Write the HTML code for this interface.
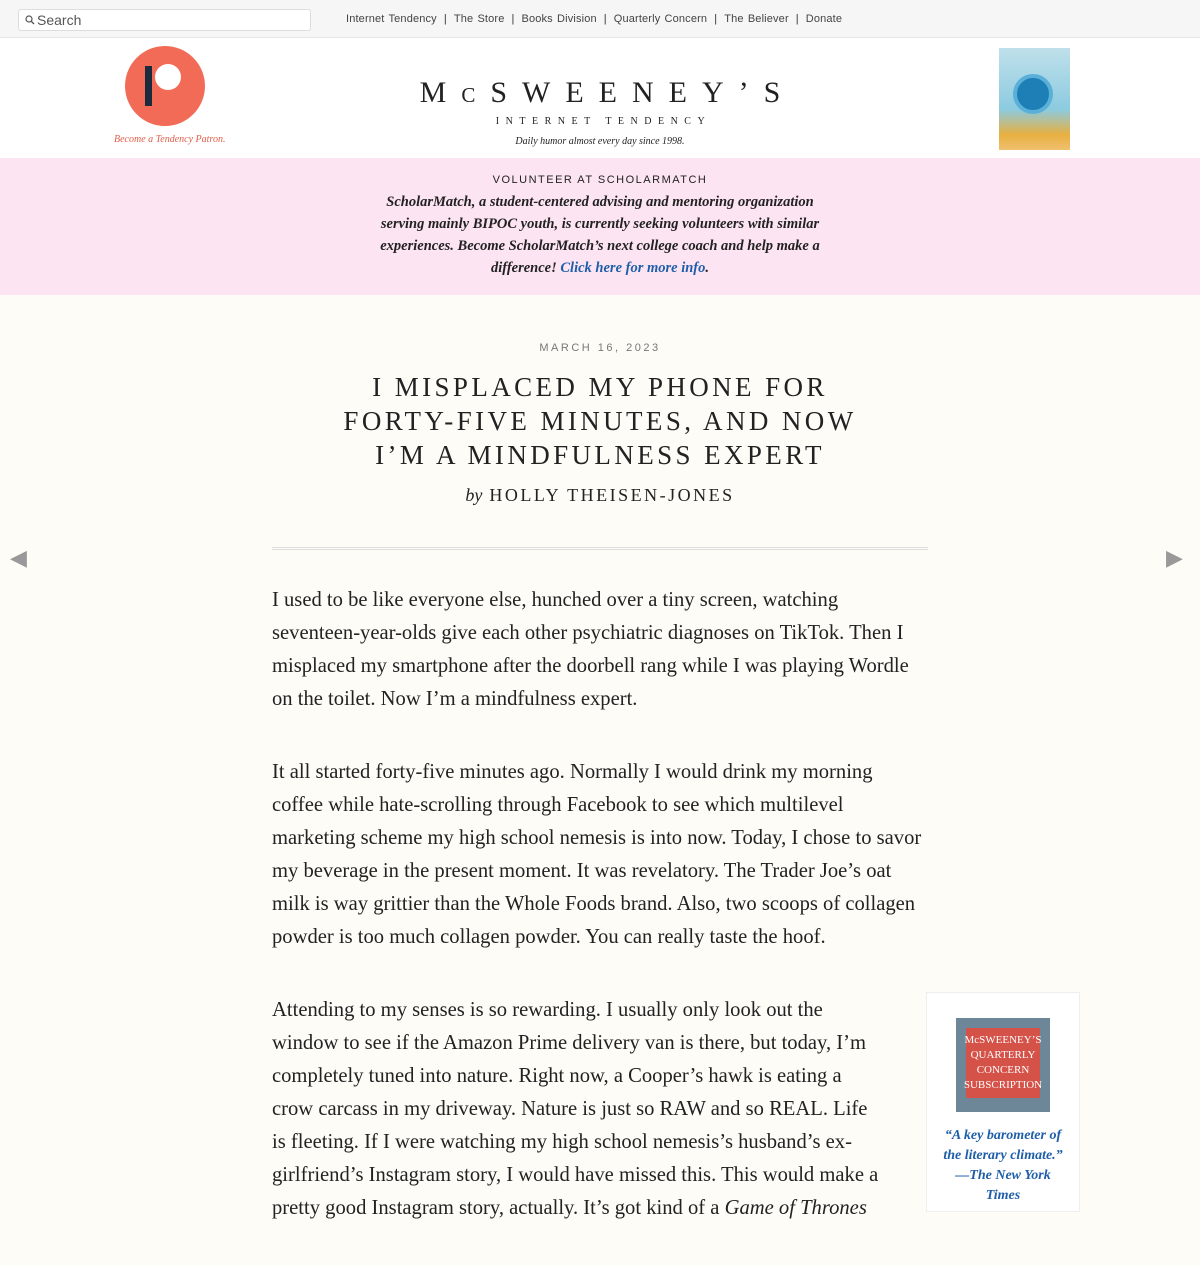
<!DOCTYPE html>
<html><head><meta charset="utf-8"><style>
*{margin:0;padding:0;box-sizing:border-box}
body{width:1200px;height:1200px;overflow:hidden;background:#fdfcf7;font-family:"Liberation Serif",serif;color:#222;position:relative}
.top{height:38px;background:#f6f6f6;border-bottom:1px solid #e6e6e6;position:relative}
.search{position:absolute;left:18px;top:9px;width:293px;height:22px;background:#fff;border:1px solid #ddd;border-radius:3px;font:14px "Liberation Sans",sans-serif;color:#555;padding:2px 0 0 18px}
.search svg{position:absolute;left:6px;top:5px}
.nav{position:absolute;left:346px;top:13px;font:11px "Liberation Sans",sans-serif;color:#444;letter-spacing:0.15px;word-spacing:1px}
.nav span{margin:0 7px;color:#333}
.head{height:120px;background:#fff;position:relative}
.patron{position:absolute;left:125px;top:8px;width:80px;height:80px;border-radius:50%;background:#f26b57}
.patron .bar{position:absolute;left:20px;top:20px;width:7px;height:40px;background:#1c2a3d}
.patron .c{position:absolute;left:30px;top:18px;width:26px;height:26px;border-radius:50%;background:#fff}
.pt{position:absolute;left:114px;top:96px;font:italic 10px "Liberation Serif",serif;color:#e3604c}
.logo{position:absolute;left:0;width:1200px;text-align:center}
.cover{position:absolute;left:999px;top:10px;width:71px;height:102px;background:linear-gradient(#bfe0ea,#8ccbe0 60%,#e8b040 85%,#f0c070)}
.cover .o{position:absolute;left:14px;top:26px;width:40px;height:40px;border-radius:50%;background:#1d7fb5;border:4px solid #5ab0d8}
.pink{height:137px;background:#fce4f3;text-align:center;padding-top:16px}
.pink h4{font:11px "Liberation Sans",sans-serif;letter-spacing:1.5px;color:#222;font-weight:normal}
.pink p{font:italic bold 14.5px/22px "Liberation Serif",serif;width:450px;margin:5px auto 0;color:#222}
.pink a{color:#1f5ea8}
.date{position:absolute;top:342px;width:1200px;text-align:center;font:11px "Liberation Sans",sans-serif;letter-spacing:2.5px;color:#777}
.title{position:absolute;top:370px;left:0;width:1200px;text-align:center;font:27px/34px "Liberation Serif",serif;letter-spacing:3.4px;color:#222}
.by{position:absolute;top:485px;width:1200px;text-align:center;font:18px "Liberation Serif",serif;letter-spacing:2.5px}
.by i{letter-spacing:0}
.rule{position:absolute;top:547px;left:272px;width:656px;height:3px;border-top:1px solid #ddd;border-bottom:1px solid #ddd}
.arrow{position:absolute;top:546px;font:22px "DejaVu Sans",sans-serif;color:#999}
.body{position:absolute;top:584px;left:272px;width:700px;font:20.6px/33px "Liberation Serif",serif;color:#222;white-space:nowrap}
.body p{margin-bottom:40px}
.side{position:absolute;left:926px;top:992px;width:154px;height:220px;background:#fff;border:1px solid #eee;text-align:center}
.sq{margin:25px auto 0;width:94px;height:94px;background:#6d8799;color:#fff;font:11px/15px "Liberation Serif",serif;padding-top:15px;position:relative}
.sq:before{content:"";position:absolute;left:10px;top:10px;width:74px;height:70px;background:#e8493a;opacity:.85}
.sq span{position:relative}
.q{font:italic bold 14px/20px "Liberation Serif",serif;color:#1f5ea8;margin:14px auto 0;width:120px}
</style></head><body>
<div class="top">
<div class="search"><svg width="10" height="10" viewBox="0 0 10 10"><circle cx="4" cy="4" r="3" fill="none" stroke="#555" stroke-width="1.2"/><path d="M6 6l3 3" stroke="#555" stroke-width="1.3"/></svg>Search</div>
<div class="nav">Internet Tendency<span>|</span>The Store<span>|</span>Books Division<span>|</span>Quarterly Concern<span>|</span>The Believer<span>|</span>Donate</div>
</div>
<div class="head">
<div class="patron"><div class="bar"></div><div class="c"></div></div>
<div class="pt">Become a Tendency Patron.</div>
<div class="logo" style="top:38px;font-size:30px;letter-spacing:15px;padding-left:15px">M<span style="font-size:21px">C</span>SWEENEY’S</div>
<div class="logo" style="top:78px;font-size:10px;letter-spacing:6.5px;padding-left:7px">INTERNET TENDENCY</div>
<div class="logo" style="top:98px;font-size:10px;font-style:italic">Daily humor almost every day since 1998.</div>
<div class="cover"><div class="o"></div></div>
</div>
<div class="pink"><h4>VOLUNTEER AT SCHOLARMATCH</h4>
<p>ScholarMatch, a student-centered advising and mentoring organization serving mainly BIPOC youth, is currently seeking volunteers with similar experiences. Become ScholarMatch’s next college coach and help make a difference! <a>Click here for more info</a>.</p></div>
<div class="date">MARCH 16, 2023</div>
<div class="title">I MISPLACED MY PHONE FOR<br>FORTY-FIVE MINUTES, AND NOW<br>I’M A MINDFULNESS EXPERT</div>
<div class="by"><i>by</i> HOLLY THEISEN-JONES</div>
<div class="rule"></div>
<div class="arrow" style="left:10px">◀</div><div class="arrow" style="left:1166px">▶</div>
<div class="body">
<p>I used to be like everyone else, hunched over a tiny screen, watching<br>seventeen-year-olds give each other psychiatric diagnoses on TikTok. Then I<br>misplaced my smartphone after the doorbell rang while I was playing Wordle<br>on the toilet. Now I’m a mindfulness expert.</p>
<p>It all started forty-five minutes ago. Normally I would drink my morning<br>coffee while hate-scrolling through Facebook to see which multilevel<br>marketing scheme my high school nemesis is into now. Today, I chose to savor<br>my beverage in the present moment. It was revelatory. The Trader Joe’s oat<br>milk is way grittier than the Whole Foods brand. Also, two scoops of collagen<br>powder is too much collagen powder. You can really taste the hoof.</p>
<p>Attending to my senses is so rewarding. I usually only look out the<br>window to see if the Amazon Prime delivery van is there, but today, I’m<br>completely tuned into nature. Right now, a Cooper’s hawk is eating a<br>crow carcass in my driveway. Nature is just so RAW and so REAL. Life<br>is fleeting. If I were watching my high school nemesis’s husband’s ex-<br>girlfriend’s Instagram story, I would have missed this. This would make a<br>pretty good Instagram story, actually. It’s got kind of a <i>Game of Thrones</i></p>
</div>
<div class="side"><div class="sq"><span>McSWEENEY’S<br>QUARTERLY<br>CONCERN<br>SUBSCRIPTION</span></div>
<div class="q">“A key barometer of the literary climate.” —The New York Times</div></div>
</body></html>
